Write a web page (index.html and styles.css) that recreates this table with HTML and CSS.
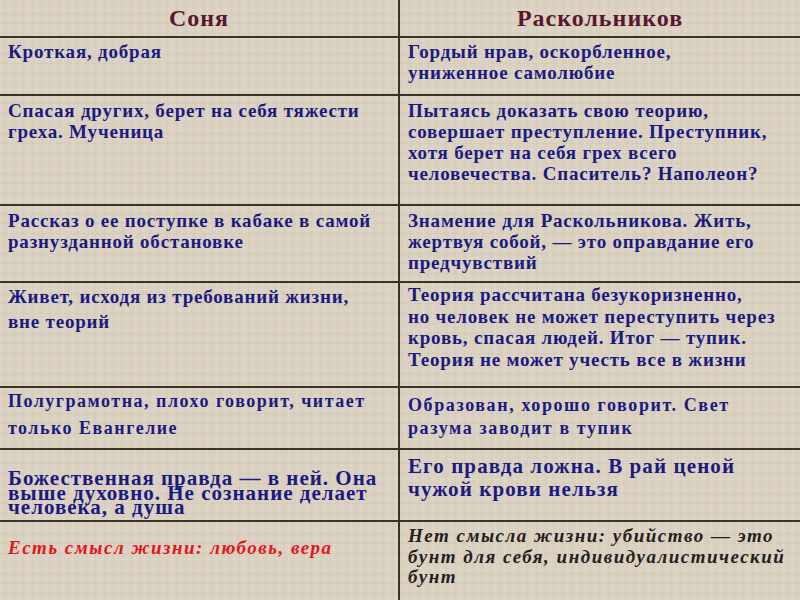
FILE: index.html
```html
<!DOCTYPE html>
<html lang="ru">
<head>
<meta charset="utf-8">
<title>Соня и Раскольников</title>
<link rel="stylesheet" href="styles.css">
</head>
<body>
<div class="table">
  <div class="cell head left">Соня</div>
  <div class="cell head">Раскольников</div>

  <div class="cell left r1">Кроткая, добрая</div>
  <div class="cell r1">Гордый нрав, оскорбленное,<br>униженное самолюбие</div>

  <div class="cell left r2">Спасая других, берет на себя тяжести<br>греха. Мученица</div>
  <div class="cell r2">Пытаясь доказать свою теорию,<br>совершает преступление. Преступник,<br>хотя берет на себя грех всего<br>человечества. Спаситель? Наполеон?</div>

  <div class="cell left r3">Рассказ о ее поступке в кабаке в самой<br>разнузданной обстановке</div>
  <div class="cell r3">Знамение для Раскольникова. Жить,<br>жертвуя собой, — это оправдание его<br>предчувствий</div>

  <div class="cell left r4 tall">Живет, исходя из требований жизни,<br>вне теорий</div>
  <div class="cell r4">Теория рассчитана безукоризненно,<br>но человек не может переступить через<br>кровь, спасая людей. Итог — тупик.<br>Теория не может учесть все в жизни</div>

  <div class="cell left r5 airy">Полуграмотна, плохо говорит, читает<br>только Евангелие</div>
  <div class="cell r5 mid">Образован, хорошо говорит. Свет<br>разума заводит в тупик</div>

  <div class="cell left r6 dense">Божественная правда — в ней. Она<br>выше духовно. Не сознание делает<br>человека, а душа</div>
  <div class="cell r6 big">Его правда ложна. В рай ценой<br>чужой крови нельзя</div>

  <div class="cell left r7 red">Есть смысл жизни: любовь, вера</div>
  <div class="cell r7 dark">Нет смысла жизни: убийство — это<br>бунт для себя, индивидуалистический<br>бунт</div>
</div>
</body>
</html>
```

FILE: styles.css
```css
html, body {
  margin: 0;
  padding: 0;
}

body {
  width: 800px;
  height: 600px;
  overflow: hidden;
  background-color: #dad1c1;
  background-image:
    repeating-linear-gradient(90deg, rgba(255,255,255,0.10) 0 1px, transparent 1px 5px, rgba(110,95,75,0.045) 5px 6px, transparent 6px 9px),
    repeating-linear-gradient(0deg, rgba(255,255,255,0.08) 0 1px, transparent 1px 6px, rgba(110,95,75,0.045) 6px 7px, transparent 7px 10px);
  font-family: "Liberation Serif", "Times New Roman", serif;
}

.table {
  display: grid;
  grid-template-columns: 400px 400px;
  grid-template-rows: 38px 58px 110px 77px 105px 62px 72px 78px;
  width: 800px;
  height: 600px;
}

.cell {
  box-sizing: border-box;
  border-bottom: 2px solid #3a3226;
  padding: 3px 8px 0 8px;
  color: #1b1a80;
  font-weight: bold;
  font-size: 19px;
  line-height: 21px;
  letter-spacing: 0.8px;
  white-space: nowrap;
  overflow: hidden;
}

.cell.left {
  border-right: 2px solid #3a3226;
}

.head {
  color: #5a1630;
  font-size: 24px;
  line-height: 28px;
  letter-spacing: 1px;
  text-align: center;
  padding-top: 4px;
}

.r2, .r3 {
  padding-top: 4px;
}

.r4 {
  padding-top: 1px;
  line-height: 21.5px;
}

.r4.tall {
  line-height: 25px;
  padding-top: 1px;
}

.r5.airy {
  font-size: 18px;
  line-height: 27px;
  letter-spacing: 1.5px;
  padding-top: 0;
}

.r5.mid {
  font-size: 18px;
  line-height: 23px;
  letter-spacing: 1.6px;
  padding-top: 6px;
}

.r6.dense {
  font-size: 21px;
  line-height: 14.5px;
  letter-spacing: 1px;
  padding-top: 21px;
}

.r6.big {
  font-size: 21px;
  line-height: 23px;
  letter-spacing: 1.1px;
  padding-top: 5px;
}

.r7 {
  border-bottom: none;
  font-style: italic;
}

.r7.red {
  color: #e3161c;
  font-size: 19px;
  padding-top: 15px;
  letter-spacing: 1.5px;
}

.r7.dark {
  color: #24201c;
  font-size: 19px;
  line-height: 20.5px;
  letter-spacing: 1.5px;
  padding-top: 4px;
}
```
